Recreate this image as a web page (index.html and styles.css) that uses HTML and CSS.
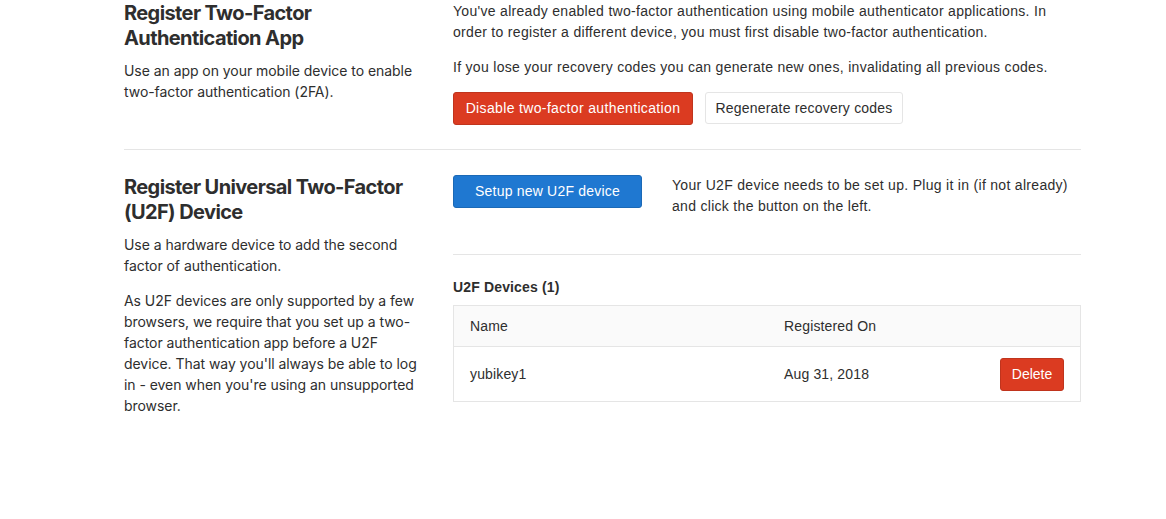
FILE: index.html
```html
<!DOCTYPE html>
<html>
<head>
<meta charset="utf-8">
<link rel="stylesheet" href="styles.css">
</head>
<body>
<div class="container">
  <section class="row">
    <div class="col-left">
      <h4 class="title">Register Two-Factor Authentication App</h4>
      <p class="desc">Use an app on your mobile device to enable two-factor authentication (2FA).</p>
    </div>
    <div class="col-right">
      <p class="txt">You've already enabled two-factor authentication using mobile authenticator applications. In order to register a different device, you must first disable two-factor authentication.</p>
      <p class="txt">If you lose your recovery codes you can generate new ones, invalidating all previous codes.</p>
      <div class="actions">
        <button class="btn btn-danger btn-disable">Disable two-factor authentication</button>
        <button class="btn btn-default">Regenerate recovery codes</button>
      </div>
    </div>
  </section>
  <hr class="sep">
  <section class="row">
    <div class="col-left">
      <h4 class="title title-second">Register Universal Two-Factor (U2F) Device</h4>
      <p class="desc">Use a hardware device to add the second factor of authentication.</p>
      <p class="desc">As U2F devices are only supported by a few browsers, we require that you set up a two-factor authentication app before a U2F device. That way you'll always be able to log in - even when you're using an unsupported browser.</p>
    </div>
    <div class="col-right">
      <div class="setup">
        <button class="btn btn-info btn-setup">Setup new U2F device</button>
        <p class="txt setup-text">Your U2F device needs to be set up. Plug it in (if not already) and click the button on the left.</p>
      </div>
      <hr class="sep sep-inner">
      <h5 class="devices-title">U2F Devices (1)</h5>
      <div class="table">
        <div class="tr thead">
          <div class="td">Name</div>
          <div class="td">Registered On</div>
          <div class="td"></div>
        </div>
        <div class="tr tbody">
          <div class="td">yubikey1</div>
          <div class="td">Aug 31, 2018</div>
          <div class="td td-action"><button class="btn btn-danger btn-delete">Delete</button></div>
        </div>
      </div>
    </div>
  </section>
</div>
</body>
</html>
```
FILE: styles.css
```css
* { box-sizing: border-box; }
html, body { margin: 0; padding: 0; background: #fff; }
body {
  color: #2e2e2e;
  font-family: "Liberation Sans", Arial, sans-serif;
  font-size: 14px;
  line-height: 21px;
}
.container {
  width: 957px;
  margin-left: 124px;
  padding-top: 1px;
}
.row {
  display: grid;
  grid-template-columns: 299px 628px;
  column-gap: 30px;
}
.col-left {
  font-family: Inter, "Liberation Sans", sans-serif;
}
.title {
  margin: 0 0 9px;
  font-size: 20px;
  line-height: 25px;
  font-weight: 700;
  color: #2e2e2e;
  letter-spacing: -0.6px;
}
.title-second { margin-top: 1px; margin-bottom: 9px; }
.desc {
  margin: 0 0 14px;
  font-size: 14px;
  line-height: 21px;
  letter-spacing: -0.05px;
}
.txt {
  margin: 0 0 14px;
  letter-spacing: 0.3px;
}
.actions {
  display: flex;
  gap: 12px;
}
.btn {
  font-family: "Liberation Sans", Arial, sans-serif;
  font-size: 14px;
  line-height: 19px;
  padding: 6px 0;
  border-radius: 3px;
  border: 1px solid #e5e5e5;
  background: #fff;
  color: #2e2e2e;
  height: 33px;
  letter-spacing: 0.2px;
  white-space: nowrap;
  text-align: center;
}
.btn-danger {
  background: #db3b21;
  border-color: #c0341d;
  color: #fff;
}
.btn-info {
  background: #1f78d1;
  border-color: #1b69b6;
  color: #fff;
}
.btn-disable { width: 240px; letter-spacing: 0.35px; }
.btn-default { width: 198px; height: 32px; }
.sep {
  border: 0;
  border-top: 1px solid #e5e5e5;
  margin: 24px 0 24px;
  height: 0;
}
.setup {
  display: grid;
  grid-template-columns: 189px 1fr;
  column-gap: 30px;
  padding-top: 1px;
}
.btn-setup { width: 189px; }
.setup-text { margin: 0; }
.sep-inner { margin: 37px 0 23px; }
.devices-title {
  margin: 0 0 9px;
  font-size: 14px;
  line-height: 18px;
  font-weight: 700;
  letter-spacing: 0.15px;
}
.table {
  border: 1px solid #e5e5e5;
  letter-spacing: 0.15px;
}
.tr {
  display: grid;
  grid-template-columns: 314px 1fr 100px;
  align-items: center;
}
.thead {
  background: #fafafa;
  height: 41px;
  border-bottom: 1px solid #e5e5e5;
}
.tbody { height: 54px; }
.td { padding: 0 16px; }
.td-action {
  display: flex;
  justify-content: flex-end;
}
.btn-delete { width: 64px; letter-spacing: 0; }
```
